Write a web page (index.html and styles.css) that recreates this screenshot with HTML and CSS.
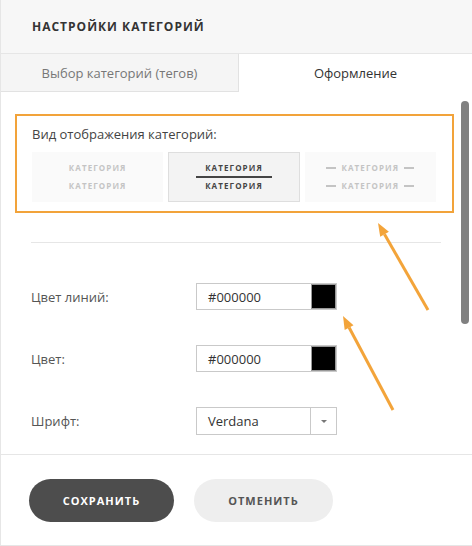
FILE: index.html
```html
<!DOCTYPE html>
<html lang="ru">
<head>
    <meta charset="UTF-8" />
    <title>Настройки категорий</title>
    <link rel="stylesheet" href="styles.css">
</head>
<body>
    <div class="dialog">
        <div class="dialog-header">Настройки категорий</div>

        <div class="tabs">
            <div class="tab">Выбор категорий (тегов)</div>
            <div class="tab active">Оформление</div>
        </div>

        <div class="dialog-body">
            <div class="view-section">
                <div class="section-label">Вид отображения категорий:</div>
                <div class="view-options">
                    <div class="view-option">
                        <span>Категория</span>
                        <span>Категория</span>
                    </div>
                    <div class="view-option selected">
                        <span>Категория</span>
                        <i class="underline"></i>
                        <span>Категория</span>
                    </div>
                    <div class="view-option">
                        <span class="dashed">Категория</span>
                        <span class="dashed">Категория</span>
                    </div>
                </div>
            </div>

            <div class="separator"></div>

            <div class="form-row">
                <label>Цвет линий:</label>
                <div class="color-input">
                    <span class="value">#000000</span>
                    <span class="swatch"></span>
                </div>
            </div>
            <div class="form-row">
                <label>Цвет:</label>
                <div class="color-input">
                    <span class="value">#000000</span>
                    <span class="swatch"></span>
                </div>
            </div>
            <div class="form-row">
                <label>Шрифт:</label>
                <div class="select">
                    <span class="value">Verdana</span>
                    <span class="caret"></span>
                </div>
            </div>

            <div class="scroll-thumb"></div>
        </div>

        <div class="dialog-footer">
            <button class="btn btn-save">Сохранить</button>
            <button class="btn btn-cancel">Отменить</button>
        </div>
    </div>

    <svg class="arrows" width="472" height="546" viewBox="0 0 472 546">
        <line x1="428" y1="310" x2="384.5" y2="234.3" />
        <polygon points="378,223 388.9,231.8 380.2,236.8" />
        <line x1="393" y1="410" x2="349.1" y2="327.5" />
        <polygon points="343,316 353.5,325.2 344.7,329.9" />
    </svg>
</body>
</html>
```

FILE: styles.css
```css
body {
    margin: 0;
    padding: 0;
    font-family: "Open Sans", "Liberation Sans", sans-serif;
    background-color: #fff;
    color: #444;
    overflow: hidden;
}

.dialog {
    width: 472px;
    height: 546px;
    box-sizing: border-box;
    border-left: 1px solid #e6e6e6;
    border-bottom: 1px solid #e6e6e6;
    display: flex;
    flex-direction: column;
}

.dialog-header {
    height: 53px;
    border-bottom: 1px solid #e6e6e6;
    background-color: #f7f7f7;
    padding-left: 31px;
    display: flex;
    align-items: center;
    font-size: 12px;
    font-weight: bold;
    letter-spacing: 1px;
    text-transform: uppercase;
    color: #333;
}

.tabs {
    display: flex;
    height: 38px;
}

.tab {
    flex: 0 0 238px;
    box-sizing: border-box;
    display: flex;
    align-items: center;
    justify-content: center;
    font-size: 13px;
    color: #777;
    background-color: #f5f5f5;
    border-right: 1px solid #e2e2e2;
    border-bottom: 1px solid #e2e2e2;
}

.tab.active {
    flex: 1;
    background-color: #fff;
    color: #333;
    border: none;
}

.dialog-body {
    position: relative;
    height: 362px;
    overflow: hidden;
}

.view-section {
    margin: 22px 0 0 14px;
    width: 439px;
    box-sizing: border-box;
    border: 2px solid #f2a33a;
    padding: 9px 16px 9px 15px;
}

.section-label {
    font-size: 13px;
    line-height: 18px;
    color: #444;
    margin-bottom: 9px;
}

.view-options {
    display: flex;
    gap: 5px;
}

.view-option {
    width: 132px;
    height: 50px;
    box-sizing: border-box;
    background-color: #fafafa;
    display: flex;
    flex-direction: column;
    align-items: center;
    justify-content: center;
    gap: 8px;
}

.view-option span {
    font-size: 8px;
    line-height: 10px;
    font-weight: bold;
    letter-spacing: 1.1px;
    text-transform: uppercase;
    color: #c4c4c4;
}

.view-option.selected {
    background-color: #f3f3f3;
    border: 1px solid #dedede;
    gap: 0;
}

.view-option.selected span {
    color: #444;
}

.underline {
    width: 76px;
    height: 2px;
    background-color: #444;
    margin: 3px 0;
}

.view-option .dashed::before,
.view-option .dashed::after {
    content: "";
    display: inline-block;
    width: 10px;
    height: 2px;
    background-color: #c4c4c4;
    vertical-align: middle;
    margin: -2px 5px 0;
}

.separator {
    height: 1px;
    background-color: #e6e6e6;
    margin: 29px 0 0 30px;
    width: 410px;
}

.form-row {
    display: flex;
    align-items: center;
    padding-left: 30px;
    margin-top: 35px;
}

.separator + .form-row {
    margin-top: 40px;
}

.form-row label {
    width: 165px;
    font-size: 13px;
    color: #555;
}

.color-input,
.select {
    width: 141px;
    height: 27px;
    box-sizing: border-box;
    border: 1px solid #c9c9c9;
    display: flex;
    align-items: center;
    font-size: 13px;
    color: #333;
}

.select {
    height: 28px;
}

.value {
    flex: 1;
    padding-left: 11px;
}

.swatch {
    width: 25px;
    height: 25px;
    box-sizing: border-box;
    background-color: #000;
    border: 1px solid #999;
}

.caret {
    width: 25px;
    height: 100%;
    border-left: 1px solid #c9c9c9;
    display: flex;
    align-items: center;
    justify-content: center;
}

.caret::after {
    content: "";
    border-left: 3px solid transparent;
    border-right: 3px solid transparent;
    border-top: 3px solid #777;
}

.scroll-thumb {
    position: absolute;
    top: 9px;
    right: 3px;
    width: 8px;
    height: 223px;
    border-radius: 4px;
    background-color: #808080;
}

.dialog-footer {
    flex: 1;
    border-top: 1px solid #e6e6e6;
    padding: 24px 0 0 28px;
    display: flex;
    align-items: flex-start;
    gap: 20px;
}

.btn {
    height: 43px;
    border: none;
    border-radius: 22px;
    font-family: "Open Sans", "Liberation Sans", sans-serif;
    font-size: 11px;
    font-weight: bold;
    letter-spacing: 1px;
    text-transform: uppercase;
    cursor: pointer;
}

.btn-save {
    width: 145px;
    background-color: #4d4d4d;
    color: #fff;
}

.btn-cancel {
    width: 139px;
    background-color: #eee;
    color: #555;
}

.arrows {
    position: absolute;
    top: 0;
    left: 0;
    pointer-events: none;
}

.arrows line {
    stroke: #f3a43a;
    stroke-width: 3;
}

.arrows polygon {
    fill: #f3a43a;
}
```
